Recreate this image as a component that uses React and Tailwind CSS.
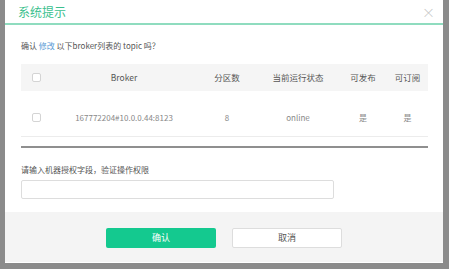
import React from 'react';

const cols = ['Broker', '分区数', '当前运行状态', '可发布', '可订阅'];

function Box() {
    return <span className="block w-[9px] h-[9px] rounded-[2px] border border-[#d4d4d4] bg-white" />;
}

export default function App() {
    return (
        <div className="w-[449px] h-[269px] bg-[#8b8b8b] overflow-hidden" style={{ fontFamily: '"Noto Sans CJK SC", "Noto Sans", sans-serif' }}>
            <div className="ml-[5px] w-[438px] h-[263px] bg-white border-b border-white flex flex-col">
                {/* header */}
                <div className="h-[25px] flex items-center justify-between pl-[13px] pr-[8px] border-b-2 border-[#8fdcbf]">
                    <span className="text-[12px] text-[#3bbf8e]">系统提示</span>
                    <span className="text-[13px] leading-none font-light text-[#c2c2c2]">×</span>
                </div>

                <div className="px-[16px] flex-1">
                    <p className="mt-[15px] text-[8px] text-[#555]">
                        确认 <span className="text-[#5b9bd5]">修改</span> 以下broker列表的 topic 吗？
                    </p>

                    {/* table */}
                    <div className="mt-[12px] w-[407px]">
                        <div className="h-[27px] bg-[#f5f5f5] grid grid-cols-[30px_146px_60px_82px_48px_41px] items-center text-[8.5px] text-[#555]">
                            <div className="pl-[11px]"><Box /></div>
                            {cols.map((c) => (
                                <div key={c} className="text-center">{c}</div>
                            ))}
                        </div>
                        <div className="h-[46px] pt-[8px] border-b border-[#ececec] grid grid-cols-[30px_146px_60px_82px_48px_41px] items-center text-[8px] text-[#888]">
                            <div className="pl-[11px]"><Box /></div>
                            <div className="text-center">167772204#10.0.0.44:8123</div>
                            <div className="text-center">8</div>
                            <div className="text-center">online</div>
                            <div className="text-center">是</div>
                            <div className="text-center">是</div>
                        </div>
                        <div className="mt-[9px] h-[2px] bg-[#8f8f8f]" />
                    </div>

                    <p className="mt-[16px] text-[8px] text-[#555]">请输入机器授权字段，验证操作权限</p>
                    <div className="mt-[4px] w-[313px] h-[19px] border border-[#ddd] rounded-[2px]" />
                </div>

                {/* footer */}
                <div className="h-[50px] bg-[#f4f4f4] flex items-center justify-center gap-[16px] pt-[2px]">
                    <button className="w-[110px] h-[20px] bg-[#14c98f] rounded-[2px] text-white text-[9px]">确认</button>
                    <button className="w-[110px] h-[20px] bg-white border border-[#ddd] rounded-[2px] text-[#555] text-[9px]">取消</button>
                </div>
            </div>
        </div>
    );
}
